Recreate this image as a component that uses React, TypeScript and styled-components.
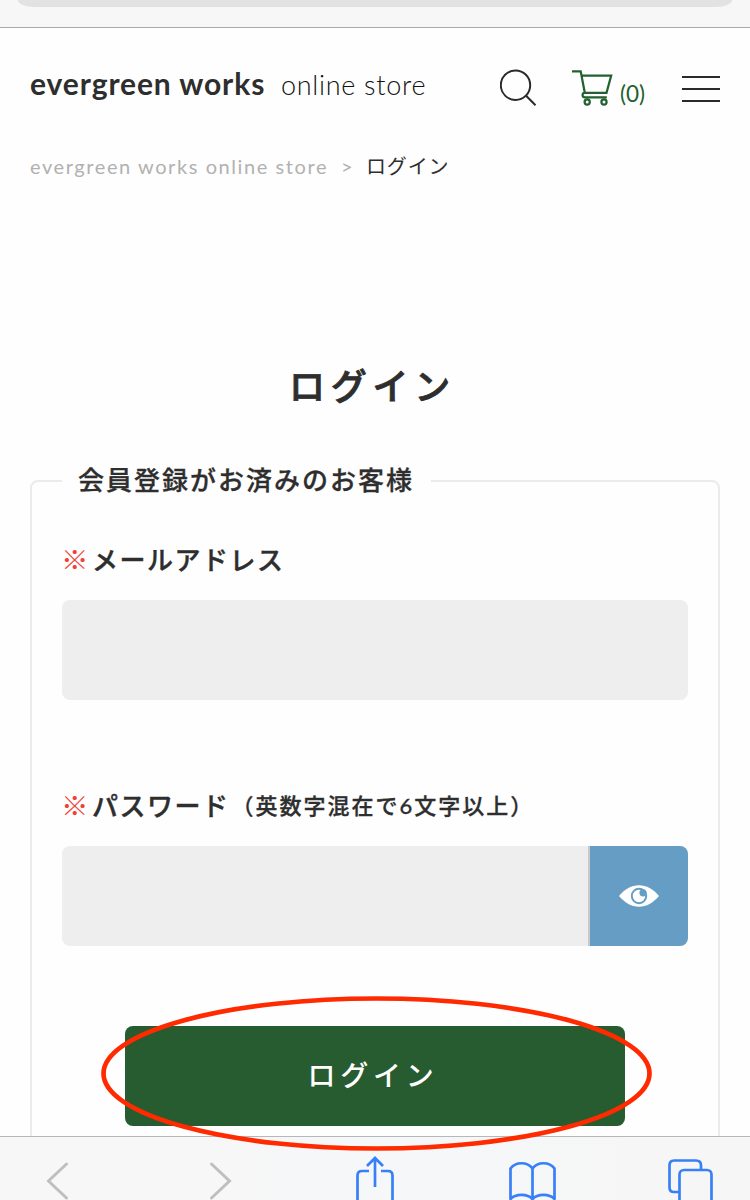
import React from 'react';
import styled, { createGlobalStyle } from 'styled-components';

const GlobalStyle = createGlobalStyle`
  *, *::before, *::after {
    box-sizing: border-box;
  }

  body {
    margin: 0;
    background: #fefefe;
    color: #2e2e2e;
    font-family: Lato, 'Noto Sans CJK JP', sans-serif;
  }
`;

const Screen = styled.div`
  width: 750px;
  height: 1200px;
  display: flex;
  flex-direction: column;
  overflow: hidden;
  background: #fefefe;
`;

const AddressBar = styled.div`
  flex: none;
  height: 28px;
  padding: 0 18px;
  background: #f7f7f7;
  border-bottom: 1px solid #a9a9a9;
`;

const AddressField = styled.div`
  height: 7px;
  background: #e2e2e3;
  border-radius: 0 0 16px 16px / 0 0 7px 7px;
`;

const Page = styled.div`
  flex: 1;
  min-height: 0;
  padding: 0 30px;
  overflow: hidden;
`;

const Header = styled.header`
  display: flex;
  height: 116px;
  padding-top: 34px;
`;

const Brand = styled.a`
  display: flex;
  width: 470px;
  height: 46px;
  line-height: 46px;
  white-space: nowrap;
`;

const BrandName = styled.span`
  width: 251px;
  font-size: 30px;
  font-weight: 700;
  line-height: 42px;
  letter-spacing: 0.9px;
`;

const BrandSub = styled.span`
  font-size: 27px;
  font-weight: 300;
  letter-spacing: 0.7px;
  color: #111;
`;

const HeaderIcons = styled.div`
  display: flex;
  flex: 1;
`;

const Cart = styled.a`
  display: flex;
  margin-left: 34px;
  color: #22602f;
`;

const CartCount = styled.span`
  padding: 16px 0 0 7px;
  font-size: 22.5px;
  line-height: 32px;
`;

const MenuButton = styled.div`
  display: flex;
  flex-direction: column;
  gap: 10px;
  width: 38px;
  margin: 14px 0 0 auto;
`;

const MenuLine = styled.span`
  height: 2px;
  background: #2a2a2c;
`;

const Breadcrumb = styled.nav`
  display: flex;
  height: 46px;
  line-height: 44px;
  font-size: 20px;
  letter-spacing: 1.58px;
  white-space: nowrap;
  color: #b1b1b1;
`;

const Separator = styled.span`
  width: 25px;
  margin-left: 13px;
`;

const Current = styled.span`
  letter-spacing: 0.8px;
  color: #2e2e2e;
`;

const Title = styled.h1`
  height: 60px;
  margin: 166px 0 0;
  padding-right: 5px;
  font-size: 36px;
  font-weight: 500;
  line-height: 61px;
  letter-spacing: 5.8px;
  text-align: center;
  -webkit-text-stroke: 0.9px;
`;

const Fieldset = styled.fieldset`
  height: 760px;
  margin: 48px 0 0;
  padding: 0 30px;
  border: 2px solid #ebebeb;
  border-radius: 8px;
`;

const Legend = styled.legend`
  width: 369px;
  height: 34px;
  padding: 0 0 0 16px;
  font-size: 26px;
  font-weight: 500;
  line-height: 33px;
  letter-spacing: 2px;
  white-space: nowrap;
  -webkit-text-stroke: 0.3px;
`;

const Field = styled.div<{ $top: number }>`
  padding-top: ${({ $top }) => $top}px;
`;

const Label = styled.label`
  display: flex;
  height: 40px;
  font-size: 26px;
  font-weight: 500;
  line-height: 40px;
  letter-spacing: 1.5px;
  white-space: nowrap;
  -webkit-text-stroke: 0.4px;
`;

const Required = styled.span`
  width: 31px;
  margin-left: -1px;
  font-size: 27.5px;
  font-weight: 400;
  color: #ef4136;
  -webkit-text-stroke: 0;
`;

const Hint = styled.span`
  margin-left: 2px;
  font-size: 22px;
  letter-spacing: 2px;
  -webkit-text-stroke: 0.3px;
`;

const InputGroup = styled.div`
  display: flex;
  height: 100px;
  margin-top: 20px;
  overflow: hidden;
  border-radius: 8px;
  background: #eee;
`;

const Input = styled.input`
  flex: 1;
  min-width: 0;
  padding: 0 20px;
  border: 0;
  background: transparent;
  font-size: 26px;
`;

const RevealButton = styled.button`
  display: flex;
  align-items: center;
  justify-content: center;
  width: 100px;
  padding: 0;
  border: 0;
  border-left: 2px solid #c9c9c9;
  background: #669dc4;
`;

const SubmitArea = styled.div`
  display: flex;
  justify-content: center;
  padding-top: 80px;
`;

const Submit = styled.button`
  width: 500px;
  height: 100px;
  padding: 0 4px 4px 0;
  border: 0;
  border-radius: 8px;
  background: #265c2f;
  color: #fff;
  font-family: inherit;
  font-size: 28px;
  font-weight: 500;
  letter-spacing: 4.8px;
`;

const Highlight = styled.svg`
  position: absolute;
  z-index: 2;
  left: 100px;
  top: 994px;
`;

const BottomBar = styled.nav`
  display: flex;
  flex: none;
  height: 64px;
  border-top: 1px solid #b5b7b9;
  background: linear-gradient(90deg, #f7f7f7 30%, #f5f7f9 50%, #f6f6f6 85%);
`;

const BarIcon = styled.svg<{ $gap: number; $muted?: boolean }>`
  flex: none;
  margin-left: ${({ $gap }) => $gap}px;
  fill: none;
  stroke: ${({ $muted }) => ($muted ? '#bfbfbf' : '#3880f8')};
  stroke-width: ${({ $muted }) => ($muted ? 3 : 2.7)};
`;

const SearchIcon = () => (
  <svg width="38" height="50" viewBox="500 62 38 50" fill="none" stroke="#2a2a2c" strokeWidth="2">
    <circle cx="515.5" cy="85.2" r="14.7" />
    <path d="M525.6 95.3 535.5 105.2" />
  </svg>
);

const CartIcon = () => (
  <svg width="41" height="50" viewBox="572 62 41 50" fill="none" stroke="currentColor" strokeWidth="2.2">
    <path d="M572 71.3h8.7l4.1 21.5h21.7l4.7-17.2h-29.4M606.8 97.3h-22a2.25 2.25 0 0 1 0-4.5" />
    <circle cx="587.2" cy="102" r="2.6" />
    <circle cx="604" cy="102" r="2.6" />
  </svg>
);

const EyeIcon = () => (
  <svg width="42" height="26" viewBox="0 0 42 26">
    <path d="M1 13C7 6 13.5 2.3 21 2.3S35 6 41 13c-6 7-12.5 10.7-20 10.7S7 20 1 13Z" fill="#fff" />
    <circle cx="21" cy="13" r="7.2" fill="#fff" stroke="#669dc4" strokeWidth="2" />
    <circle cx="25" cy="9.8" r="3.6" fill="#669dc4" />
  </svg>
);

interface TextFieldProps {
  label: string;
  hint?: string;
  password?: boolean;
  top: number;
}

const TextField: React.FC<TextFieldProps> = ({ label, hint, password, top }) => (
  <Field $top={top}>
    <Label>
      <Required>※</Required>
      {label}
      {hint && <Hint>{hint}</Hint>}
    </Label>
    <InputGroup>
      <Input type={password ? 'password' : 'email'} />
      {password && (
        <RevealButton type="button">
          <EyeIcon />
        </RevealButton>
      )}
    </InputGroup>
  </Field>
);

const App: React.FC = () => {
  return (
    <Screen>
      <GlobalStyle />
      <AddressBar>
        <AddressField />
      </AddressBar>
      <Page>
        <Header>
          <Brand>
            <BrandName>evergreen works</BrandName>
            <BrandSub>online store</BrandSub>
          </Brand>
          <HeaderIcons>
            <SearchIcon />
            <Cart>
              <CartIcon />
              <CartCount>(0)</CartCount>
            </Cart>
            <MenuButton>
              <MenuLine />
              <MenuLine />
              <MenuLine />
            </MenuButton>
          </HeaderIcons>
        </Header>
        <Breadcrumb>
          <span>evergreen works online store</span>
          <Separator>&gt;</Separator>
          <Current>ログイン</Current>
        </Breadcrumb>
        <Title>ログイン</Title>
        <Fieldset>
          <Legend>会員登録がお済みのお客様</Legend>
          <TextField label="メールアドレス" top={42} />
          <TextField label="パスワード" hint="（英数字混在で6文字以上）" password top={86} />
          <SubmitArea>
            <Submit type="button">ログイン</Submit>
          </SubmitArea>
        </Fieldset>
      </Page>
      <BottomBar>
        <BarIcon $gap={44} $muted width="26" height="63" viewBox="44 1137 26 63" strokeLinecap="round">
          <path d="M66.5 1164 48.5 1181l18 17" />
        </BarIcon>
        <BarIcon $gap={138} $muted width="26" height="63" viewBox="208 1137 26 63" strokeLinecap="round">
          <path d="m211.5 1164 18 17-18 17" />
        </BarIcon>
        <BarIcon $gap={120} width="42" height="63" viewBox="354 1137 42 63">
          <path d="M369 1171h-7q-4.5 0-4.5 4.5V1202M381 1171h7q4.5 0 4.5 4.5V1202M375 1187v-28M367 1166l8-8 8 8" />
        </BarIcon>
        <BarIcon $gap={111} width="52" height="63" viewBox="507 1137 52 63" strokeLinejoin="round">
          <path d="M532.5 1168.5c-5-7-17-7-22 0V1199c5-5.5 17-5.5 22 0 5-5.5 17-5.5 22 0v-30.5c-5-7-17-7-22 0V1200" />
        </BarIcon>
        <BarIcon $gap={107} width="50" height="63" viewBox="666 1137 50 63">
          <path d="M679 1192h-5q-4.5 0-4.5-4.5v-22q0-5 4.5-5h22q5 0 5 5v4.5" />
          <rect x="679.5" y="1170" width="32" height="34" rx="4.5" />
        </BarIcon>
      </BottomBar>
      <Highlight width="554" height="160" viewBox="100 994 554 160" fill="none">
        <ellipse cx="376.5" cy="1073.5" rx="273" ry="75" stroke="#ff2a00" strokeWidth="4.7" />
      </Highlight>
    </Screen>
  );
};

export default App;
